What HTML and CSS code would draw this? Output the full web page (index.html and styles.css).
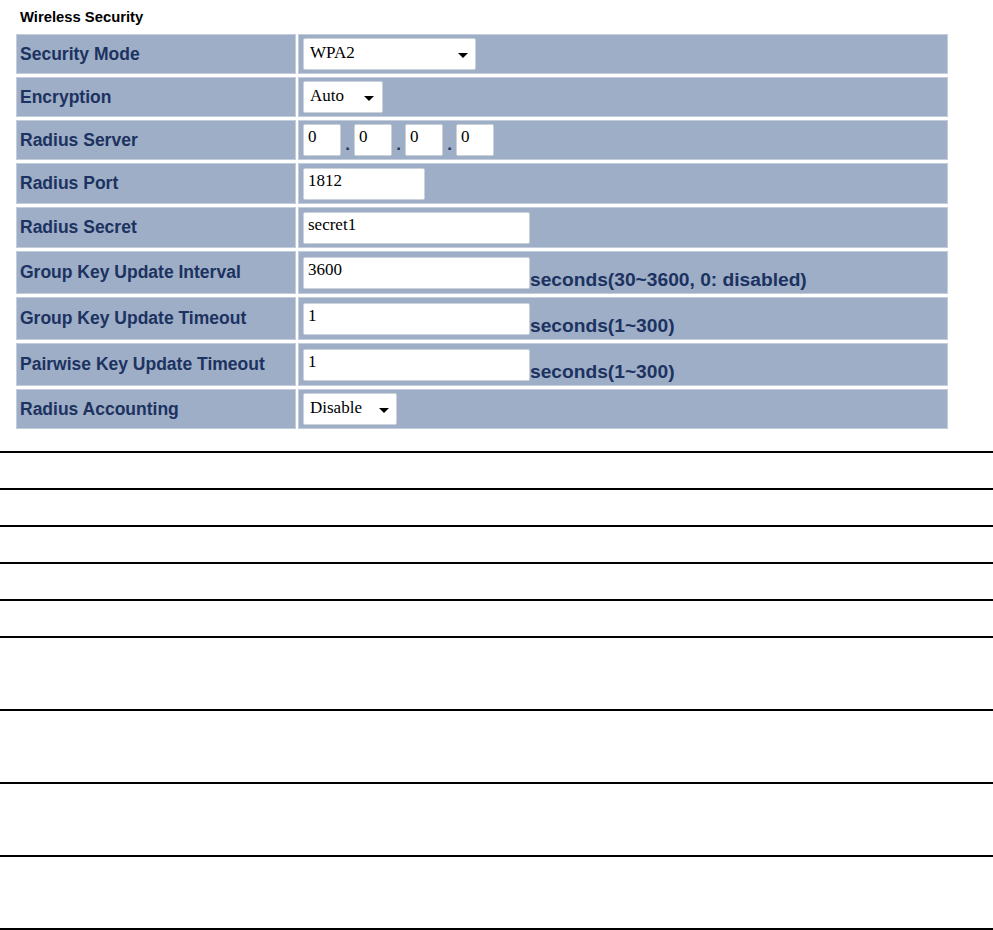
FILE: index.html
```html
<!DOCTYPE html>
<html lang="en">
<head>
  <meta charset="UTF-8" />
  <title>Wireless Security</title>
  <link rel="stylesheet" href="styles.css">
</head>
<body>
<div class="title">Wireless Security</div>
<table class="settings">
  <tr>
    <td class="label">Security Mode</td>
    <td class="value">
      <span class="select mode"><select><option>WPA2</option></select></span>
    </td>
  </tr>
  <tr>
    <td class="label">Encryption</td>
    <td class="value">
      <span class="select enc"><select><option>Auto</option></select></span>
    </td>
  </tr>
  <tr>
    <td class="label">Radius Server</td>
    <td class="value">
      <div class="ip">
        <input class="octet" type="text" value="0"><span class="dot">.</span>
        <input class="octet" type="text" value="0"><span class="dot">.</span>
        <input class="octet" type="text" value="0"><span class="dot">.</span>
        <input class="octet" type="text" value="0">
      </div>
    </td>
  </tr>
  <tr class="mid">
    <td class="label">Radius Port</td>
    <td class="value"><input class="short" type="text" value="1812"></td>
  </tr>
  <tr class="mid">
    <td class="label">Radius Secret</td>
    <td class="value"><input class="long" type="text" value="secret1"></td>
  </tr>
  <tr class="tall">
    <td class="label">Group Key Update Interval</td>
    <td class="value">
      <div class="with-unit"><input class="long" type="text" value="3600"><span class="unit">seconds(30~3600, 0: disabled)</span></div>
    </td>
  </tr>
  <tr class="tall">
    <td class="label">Group Key Update Timeout</td>
    <td class="value">
      <div class="with-unit"><input class="long" type="text" value="1"><span class="unit">seconds(1~300)</span></div>
    </td>
  </tr>
  <tr class="tall">
    <td class="label">Pairwise Key Update Timeout</td>
    <td class="value">
      <div class="with-unit"><input class="long" type="text" value="1"><span class="unit">seconds(1~300)</span></div>
    </td>
  </tr>
  <tr>
    <td class="label">Radius Accounting</td>
    <td class="value">
      <span class="select acct"><select><option>Disable</option></select></span>
    </td>
  </tr>
</table>

<div class="rules">
  <div class="rule first"></div>
  <div class="rule"></div>
  <div class="rule"></div>
  <div class="rule"></div>
  <div class="rule"></div>
  <div class="rule"></div>
  <div class="rule wide"></div>
  <div class="rule wide"></div>
  <div class="rule wide"></div>
  <div class="rule wide"></div>
</div>
</body>
</html>
```

FILE: styles.css
```css
body {
  margin: 0;
  background: #fff;
  font-family: "Liberation Sans", Arial, sans-serif;
}
.title {
  padding: 8px 0 0 20px;
  font-size: 14.8px;
  line-height: 18px;
  font-weight: 700;
  color: #000;
}
.settings {
  margin: 5px 0 0 14px;
  width: 936px;
  border-collapse: separate;
  border-spacing: 2px 3px;
}
.settings td {
  background: #9eaec6;
  border: 1px solid #c3cddb;
  height: 32px;
  padding: 3px 3px 3px 3px;
}
.settings tr.mid td {
  height: 33px;
}
.settings tr.tall td {
  height: 35px;
}
.label {
  width: 272px;
  font-size: 17.5px;
  font-weight: 700;
  color: #1c3261;
  white-space: nowrap;
}
.value {
  padding-left: 4px !important;
}
input, select {
  font-family: "Liberation Serif", "Times New Roman", serif;
  font-size: 17px;
  color: #000;
  background: #fff;
  border: 1px solid #ccd2da;
  border-radius: 2px;
  box-sizing: border-box;
  height: 32px;
  margin: 0;
  outline: none;
}
input {
  padding: 0 4px 6px 4px;
  vertical-align: top;
}
.octet { width: 38px; }
.short { width: 122px; }
.long { width: 227px; }
.ip {
  display: flex;
  align-items: flex-end;
}
.dot {
  width: 13px;
  text-align: center;
  font-size: 17px;
  font-weight: 700;
  color: #1c3261;
  line-height: 22px;
}
.with-unit {
  display: flex;
  align-items: flex-end;
}
.unit {
  font-size: 19.2px;
  font-weight: 700;
  color: #1c3261;
  line-height: 21px;
  margin-bottom: -1px;
}
.select {
  position: relative;
  display: inline-block;
  vertical-align: top;
}
.select select {
  appearance: none;
  -webkit-appearance: none;
  padding: 0 20px 4px 6px;
  width: 100%;
}
.select::after {
  content: "";
  position: absolute;
  top: 15px;
  right: 8px;
  border-left: 5px solid transparent;
  border-right: 5px solid transparent;
  border-top: 5px solid #000;
}
.mode { width: 173px; }
.enc { width: 80px; }
.acct { width: 94px; }
.select.enc::after { right: 9px; }
.rule {
  height: 35px;
  border-bottom: 2px solid #000;
}
.rule.first {
  height: 19px;
}
.rule.wide {
  height: 71px;
}
```
